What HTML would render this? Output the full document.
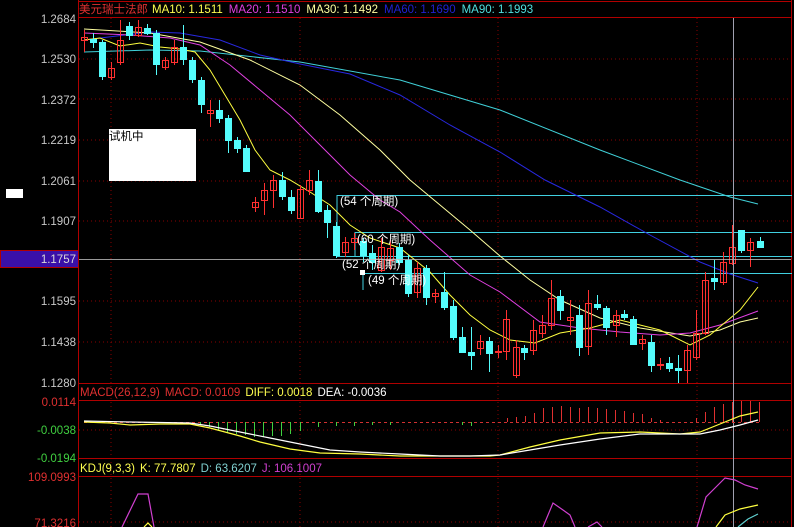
<!DOCTYPE html>
<html><head><meta charset="utf-8"><style>
html,body{margin:0;padding:0;background:#000;width:794px;height:527px;overflow:hidden}
svg{display:block;font-family:"Liberation Sans","Noto Sans CJK SC",sans-serif;font-size:11.5px}
</style></head><body>
<svg width="794" height="527" viewBox="0 0 794 527" xmlns="http://www.w3.org/2000/svg">
<rect width="794" height="527" fill="#000"/>
<!-- grid dotted -->
<g stroke="#8a0000" stroke-width="1" stroke-dasharray="1,3">
<line x1="79" y1="59" x2="791" y2="59"/><line x1="79" y1="99" x2="791" y2="99"/><line x1="79" y1="140" x2="791" y2="140"/><line x1="79" y1="181" x2="791" y2="181"/><line x1="79" y1="221" x2="791" y2="221"/><line x1="79" y1="301" x2="791" y2="301"/><line x1="79" y1="342" x2="791" y2="342"/>
<line x1="79" y1="430" x2="791" y2="430"/><line x1="79" y1="522" x2="791" y2="522"/>
<line x1="111" y1="18" x2="111" y2="527"/><line x1="300" y1="18" x2="300" y2="527"/><line x1="498" y1="18" x2="498" y2="527"/><line x1="697" y1="18" x2="697" y2="527"/>
</g>
<!-- solid red frame -->
<g stroke="#b00000" stroke-width="1" fill="none">
<line x1="78.5" y1="0" x2="78.5" y2="527"/><line x1="791.5" y1="0" x2="791.5" y2="527"/>
<line x1="78" y1="1.5" x2="792" y2="1.5"/><line x1="78" y1="17.5" x2="792" y2="17.5"/>
<line x1="78" y1="383.5" x2="792" y2="383.5"/><line x1="78" y1="400.5" x2="792" y2="400.5"/>
<line x1="78" y1="458.5" x2="792" y2="458.5"/><line x1="78" y1="476.5" x2="792" y2="476.5"/>
</g>
<!-- axis labels -->
<g fill="#c8c8c8" text-anchor="end">
<text x="76" y="23">1.2684</text><text x="76" y="63">1.2530</text><text x="76" y="104">1.2372</text><text x="76" y="144">1.2219</text><text x="76" y="185">1.2061</text><text x="76" y="225">1.1907</text><text x="76" y="305">1.1595</text><text x="76" y="346">1.1438</text><text x="76" y="387">1.1280</text>
</g>
<rect x="0.5" y="250.5" width="78" height="17" fill="#3a10a8" stroke="#b00000"/>
<text x="76" y="263" fill="#d8d8d8" text-anchor="end">1.1757</text>
<rect x="6" y="189" width="17" height="9" fill="#fff"/>
<text x="76" y="406" fill="#e03030" text-anchor="end">0.0114</text>
<text x="76" y="434" fill="#40d040" text-anchor="end">-0.0038</text>
<text x="76" y="462" fill="#40d040" text-anchor="end">-0.0194</text>
<text x="76" y="481" fill="#e03030" text-anchor="end">109.0993</text>
<text x="76" y="527" fill="#e03030" text-anchor="end">71.3216</text>
<!-- title -->
<text x="79" y="13"><tspan fill="#e03030">美元瑞士法郎</tspan><tspan fill="#ffff50" dx="4">MA10: 1.1511</tspan><tspan fill="#e040e0" dx="6">MA20: 1.1510</tspan><tspan fill="#ffffa0" dx="6">MA30: 1.1492</tspan><tspan fill="#2020d0" dx="6">MA60: 1.1690</tspan><tspan fill="#50e0e0" dx="6">MA90: 1.1993</tspan></text>
<text x="80" y="396"><tspan fill="#e03030">MACD(26,12,9)</tspan><tspan fill="#e03030" dx="5">MACD: 0.0109</tspan><tspan fill="#ffff50" dx="5">DIFF: 0.0018</tspan><tspan fill="#ffffff" dx="5">DEA: -0.0036</tspan></text>
<text x="80" y="472"><tspan fill="#ffff50">KDJ(9,3,3)</tspan><tspan fill="#ffff50" dx="5">K: 77.7807</tspan><tspan fill="#80d0d0" dx="5">D: 63.6207</tspan><tspan fill="#d040d0" dx="5">J: 106.1007</tspan></text>
<!-- cycle annotation lines -->
<g stroke="#40d0e0" stroke-width="1" fill="none">
<polyline points="337,256 337,195.5 792,195.5"/>
<polyline points="355,256 355,232.5 792,232.5"/>
<line x1="337" y1="256.5" x2="792" y2="256.5"/>
<polyline points="363,290 363,273.5 792,273.5"/>
</g>
<!-- MAs -->
<g fill="none" stroke-width="1">
<polyline stroke="#40d0d8" points="84,52 150,50 200,51 300,62 400,80 500,110 600,150 680,180 730,197 758,204"/>
<polyline stroke="#2828e0" points="84,40 150,32 180,33 220,40 260,55 300,64 350,74 400,95 450,125 500,152 545,180 600,207 650,235 700,262 730,274 758,283"/>
<polyline stroke="#ffffa0" points="84,29 150,33 200,42 250,60 300,85 340,115 380,150 410,180 440,205 470,230 500,256 530,280 560,300 600,318 640,328 690,336 720,330 740,322 758,318"/>
<polyline stroke="#e040e0" points="84,33 130,35 170,38 200,45 230,65 260,90 290,115 320,145 350,175 380,200 400,212 430,240 470,275 500,292 540,322 580,328 620,332 660,335 690,333 720,325 758,311"/>
<polyline stroke="#ffff40" points="84,40 100,38 120,46 140,43 160,47 180,49 195,52 210,70 225,95 240,120 255,150 270,170 290,180 310,192 330,205 350,225 370,238 400,248 430,272 450,295 470,315 490,330 510,340 535,343 560,333 590,328 620,320 660,330 690,345 710,335 740,310 758,287"/>
</g>
<!-- candles -->
<g stroke-width="1">
<g stroke="#ff3030" fill="none">
<line x1="84.5" y1="30" x2="84.5" y2="52"/><rect x="81.5" y="37.5" width="6" height="3"/>
<line x1="111.5" y1="62" x2="111.5" y2="80"/><rect x="108.5" y="68.5" width="6" height="9"/>
<line x1="120.5" y1="20" x2="120.5" y2="65"/><rect x="117.5" y="40.5" width="6" height="22"/>
<line x1="138.5" y1="20" x2="138.5" y2="37"/><rect x="135.5" y="27.5" width="6" height="8"/>
<line x1="165.5" y1="57" x2="165.5" y2="70"/><rect x="162.5" y="60.5" width="6" height="7"/>
<line x1="174.5" y1="40" x2="174.5" y2="65"/><rect x="171.5" y="47.5" width="6" height="15"/>
<line x1="210.5" y1="100" x2="210.5" y2="127"/><rect x="207.5" y="110.5" width="6" height="3"/>
<line x1="255.5" y1="197" x2="255.5" y2="212"/><rect x="252.5" y="202.5" width="6" height="5"/>
<line x1="264.5" y1="183" x2="264.5" y2="215"/><rect x="261.5" y="190.5" width="6" height="10"/>
<line x1="273.5" y1="175" x2="273.5" y2="208"/><rect x="270.5" y="180.5" width="6" height="10"/>
<line x1="300.5" y1="185" x2="300.5" y2="219"/><rect x="297.5" y="189.5" width="6" height="29"/>
<line x1="309.5" y1="170" x2="309.5" y2="195"/><rect x="306.5" y="180.5" width="6" height="10"/>
<line x1="345.5" y1="237" x2="345.5" y2="257"/><rect x="342.5" y="242.5" width="6" height="10"/>
<line x1="354.5" y1="233" x2="354.5" y2="250"/><rect x="351.5" y="238.5" width="6" height="4"/>
<line x1="381.5" y1="238" x2="381.5" y2="272"/><rect x="378.5" y="247.5" width="6" height="23"/>
<line x1="390.5" y1="240" x2="390.5" y2="270"/><rect x="387.5" y="248.5" width="6" height="12"/>
<line x1="417.5" y1="262" x2="417.5" y2="298"/><rect x="414.5" y="268.5" width="6" height="24"/>
<line x1="435.5" y1="289" x2="435.5" y2="303"/><rect x="432.5" y="293.5" width="6" height="3"/>
<line x1="480.5" y1="335" x2="480.5" y2="355"/><rect x="477.5" y="341.5" width="6" height="7"/>
<line x1="498.5" y1="345" x2="498.5" y2="358"/><rect x="495.5" y="351.5" width="6" height="1"/>
<line x1="506.5" y1="310" x2="506.5" y2="360"/><rect x="503.5" y="319.5" width="6" height="32"/>
<line x1="516.5" y1="340" x2="516.5" y2="378"/><rect x="513.5" y="347.5" width="6" height="28"/>
<line x1="533.5" y1="320" x2="533.5" y2="355"/><rect x="530.5" y="330.5" width="6" height="20"/>
<line x1="542.5" y1="315" x2="542.5" y2="338"/><rect x="539.5" y="325.5" width="6" height="8"/>
<line x1="551.5" y1="280" x2="551.5" y2="330"/><rect x="548.5" y="298.5" width="6" height="27"/>
<line x1="570.5" y1="300" x2="570.5" y2="335"/><rect x="567.5" y="317.5" width="6" height="3"/>
<line x1="588.5" y1="290" x2="588.5" y2="355"/><rect x="585.5" y="303.5" width="6" height="43"/>
<line x1="616.5" y1="310" x2="616.5" y2="337"/><rect x="613.5" y="315.5" width="6" height="10"/>
<line x1="642.5" y1="335" x2="642.5" y2="350"/><rect x="639.5" y="339.5" width="6" height="4"/>
<line x1="660.5" y1="358" x2="660.5" y2="370"/><rect x="657.5" y="364.5" width="6" height="1"/>
<line x1="687.5" y1="345" x2="687.5" y2="383"/><rect x="684.5" y="350.5" width="6" height="20"/>
<line x1="696.5" y1="310" x2="696.5" y2="360"/><rect x="693.5" y="333.5" width="6" height="24"/>
<line x1="705.5" y1="272" x2="705.5" y2="335"/><rect x="702.5" y="280.5" width="6" height="53"/>
<line x1="723.5" y1="252" x2="723.5" y2="285"/><rect x="720.5" y="262.5" width="6" height="20"/>
<line x1="732.5" y1="225" x2="732.5" y2="265"/><rect x="729.5" y="247.5" width="6" height="16"/>
<line x1="750.5" y1="238" x2="750.5" y2="267"/><rect x="747.5" y="242.5" width="6" height="8"/>
</g>
<g stroke="#54fcfc" fill="#54fcfc">
<line x1="93.5" y1="33" x2="93.5" y2="48"/><rect x="90.5" y="39.5" width="6" height="3"/>
<line x1="102.5" y1="40" x2="102.5" y2="80"/><rect x="99.5" y="42.5" width="6" height="34"/>
<line x1="129.5" y1="22" x2="129.5" y2="40"/><rect x="126.5" y="26.5" width="6" height="9"/>
<line x1="147.5" y1="24" x2="147.5" y2="35"/><rect x="144.5" y="28.5" width="6" height="5"/>
<line x1="156.5" y1="30" x2="156.5" y2="75"/><rect x="153.5" y="33.5" width="6" height="31"/>
<line x1="183.5" y1="25" x2="183.5" y2="65"/><rect x="180.5" y="47.5" width="6" height="12"/>
<line x1="192.5" y1="57" x2="192.5" y2="83"/><rect x="189.5" y="60.5" width="6" height="19"/>
<line x1="201.5" y1="77" x2="201.5" y2="113"/><rect x="198.5" y="80.5" width="6" height="24"/>
<line x1="219.5" y1="100" x2="219.5" y2="123"/><rect x="216.5" y="110.5" width="6" height="8"/>
<line x1="228.5" y1="115" x2="228.5" y2="153"/><rect x="225.5" y="118.5" width="6" height="22"/>
<line x1="237.5" y1="137" x2="237.5" y2="153"/><rect x="234.5" y="140.5" width="6" height="8"/>
<line x1="246.5" y1="145" x2="246.5" y2="172"/><rect x="243.5" y="148.5" width="6" height="23"/>
<line x1="282.5" y1="172" x2="282.5" y2="200"/><rect x="279.5" y="180.5" width="6" height="16"/>
<line x1="291.5" y1="190" x2="291.5" y2="214"/><rect x="288.5" y="197.5" width="6" height="13"/>
<line x1="318.5" y1="170" x2="318.5" y2="213"/><rect x="315.5" y="181.5" width="6" height="30"/>
<line x1="327.5" y1="205" x2="327.5" y2="238"/><rect x="324.5" y="210.5" width="6" height="12"/>
<line x1="336.5" y1="222" x2="336.5" y2="258"/><rect x="333.5" y="226.5" width="6" height="29"/>
<line x1="363.5" y1="238" x2="363.5" y2="262"/><rect x="360.5" y="241.5" width="6" height="14"/>
<line x1="372.5" y1="245" x2="372.5" y2="270"/><rect x="369.5" y="253.5" width="6" height="9"/>
<line x1="399.5" y1="243" x2="399.5" y2="265"/><rect x="396.5" y="247.5" width="6" height="15"/>
<line x1="408.5" y1="255" x2="408.5" y2="297"/><rect x="405.5" y="260.5" width="6" height="33"/>
<line x1="426.5" y1="265" x2="426.5" y2="305"/><rect x="423.5" y="268.5" width="6" height="29"/>
<line x1="444.5" y1="272" x2="444.5" y2="310"/><rect x="441.5" y="292.5" width="6" height="15"/>
<line x1="453.5" y1="300" x2="453.5" y2="340"/><rect x="450.5" y="306.5" width="6" height="31"/>
<line x1="462.5" y1="327" x2="462.5" y2="345"/><rect x="459.5" y="337.5" width="6" height="15"/>
<line x1="471.5" y1="327" x2="471.5" y2="370"/><rect x="468.5" y="352.5" width="6" height="3"/>
<line x1="489.5" y1="337" x2="489.5" y2="372"/><rect x="486.5" y="341.5" width="6" height="12"/>
<line x1="524.5" y1="345" x2="524.5" y2="360"/><rect x="521.5" y="348.5" width="6" height="4"/>
<line x1="560.5" y1="290" x2="560.5" y2="320"/><rect x="557.5" y="296.5" width="6" height="14"/>
<line x1="579.5" y1="305" x2="579.5" y2="356"/><rect x="576.5" y="315.5" width="6" height="32"/>
<line x1="597.5" y1="295" x2="597.5" y2="310"/><rect x="594.5" y="304.5" width="6" height="3"/>
<line x1="606.5" y1="306" x2="606.5" y2="335"/><rect x="603.5" y="308.5" width="6" height="19"/>
<line x1="624.5" y1="310" x2="624.5" y2="320"/><rect x="621.5" y="314.5" width="6" height="3"/>
<line x1="633.5" y1="316" x2="633.5" y2="345"/><rect x="630.5" y="319.5" width="6" height="25"/>
<line x1="651.5" y1="335" x2="651.5" y2="372"/><rect x="648.5" y="342.5" width="6" height="23"/>
<line x1="669.5" y1="357" x2="669.5" y2="372"/><rect x="666.5" y="363.5" width="6" height="5"/>
<line x1="678.5" y1="355" x2="678.5" y2="383"/><rect x="675.5" y="368.5" width="6" height="2"/>
<line x1="714.5" y1="260" x2="714.5" y2="290"/><rect x="711.5" y="278.5" width="6" height="3"/>
<line x1="741.5" y1="230" x2="741.5" y2="253"/><rect x="738.5" y="230.5" width="6" height="20"/>
<line x1="760.5" y1="237" x2="760.5" y2="248"/><rect x="757.5" y="241.5" width="6" height="6"/>
</g>
</g>
<!-- annotation texts -->
<g fill="#ffffff">
<text x="340" y="205">(54 个周期)</text>
<text x="357" y="243">(60 个周期)</text>
<text x="342" y="268">(52 个周期)</text>
<text x="368" y="284">(49 个周期)</text>
</g>
<rect x="360" y="270" width="5" height="5" fill="#fff"/>
<!-- crosshair -->
<line x1="79" y1="259.5" x2="791" y2="259.5" stroke="#c0c0c0" stroke-width="1" opacity="0.8"/>
<line x1="733.5" y1="18" x2="733.5" y2="527" stroke="#a0a0b0" stroke-width="1"/>
<!-- test box -->
<rect x="109" y="129" width="87" height="52" fill="#fff"/>
<text x="109" y="140" fill="#000">试机中</text>
<!-- MACD -->
<line x1="84" y1="422.5" x2="760" y2="422.5" stroke="#d03030" stroke-dasharray="3,3"/>
<g stroke="#40d040">
<line x1="200.5" y1="422" x2="200.5" y2="425"/><line x1="209.5" y1="422" x2="209.5" y2="427"/><line x1="218.5" y1="422" x2="218.5" y2="430"/><line x1="227.5" y1="422" x2="227.5" y2="432"/><line x1="236.5" y1="422" x2="236.5" y2="434"/><line x1="245.5" y1="422" x2="245.5" y2="435"/><line x1="254.5" y1="422" x2="254.5" y2="437"/><line x1="263.5" y1="422" x2="263.5" y2="437"/><line x1="272.5" y1="422" x2="272.5" y2="436"/><line x1="281.5" y1="422" x2="281.5" y2="436"/><line x1="290.5" y1="422" x2="290.5" y2="434"/><line x1="300.5" y1="422" x2="300.5" y2="431"/><line x1="318.5" y1="422" x2="318.5" y2="427"/><line x1="336.5" y1="422" x2="336.5" y2="426"/><line x1="354.5" y1="422" x2="354.5" y2="426"/><line x1="372.5" y1="422" x2="372.5" y2="425"/><line x1="390.5" y1="422" x2="390.5" y2="425"/><line x1="462.5" y1="422" x2="462.5" y2="425"/><line x1="471.5" y1="422" x2="471.5" y2="426"/>
</g>
<g stroke="#e03030">
<line x1="507.5" y1="418" x2="507.5" y2="422"/><line x1="516.5" y1="417" x2="516.5" y2="422"/><line x1="525.5" y1="416" x2="525.5" y2="422"/><line x1="534.5" y1="413" x2="534.5" y2="422"/><line x1="543.5" y1="408" x2="543.5" y2="422"/><line x1="552.5" y1="407" x2="552.5" y2="422"/><line x1="561.5" y1="406" x2="561.5" y2="422"/><line x1="570.5" y1="407" x2="570.5" y2="422"/><line x1="579.5" y1="408" x2="579.5" y2="422"/><line x1="588.5" y1="407" x2="588.5" y2="422"/><line x1="597.5" y1="408" x2="597.5" y2="422"/><line x1="606.5" y1="409" x2="606.5" y2="422"/><line x1="615.5" y1="410" x2="615.5" y2="422"/><line x1="624.5" y1="411" x2="624.5" y2="422"/><line x1="633.5" y1="413" x2="633.5" y2="422"/><line x1="642.5" y1="414" x2="642.5" y2="422"/><line x1="651.5" y1="418" x2="651.5" y2="422"/><line x1="660.5" y1="420" x2="660.5" y2="422"/><line x1="696.5" y1="418" x2="696.5" y2="422"/><line x1="705.5" y1="412" x2="705.5" y2="422"/><line x1="714.5" y1="407" x2="714.5" y2="422"/><line x1="723.5" y1="404" x2="723.5" y2="422"/><line x1="732.5" y1="402" x2="732.5" y2="422"/><line x1="741.5" y1="401" x2="741.5" y2="422"/><line x1="750.5" y1="401" x2="750.5" y2="422"/><line x1="759.5" y1="402" x2="759.5" y2="422"/>
</g>
<g fill="none" stroke-width="1.2">
<polyline stroke="#ffff40" points="84,422 110,423 130,425 160,424 190,424 210,428 240,436 260,442 290,449 320,453 360,454 400,456 430,456 460,456 490,456 500,455 530,447 560,440 600,433 640,432 680,434 700,432 720,424 740,416 758,412"/>
<polyline stroke="#ffffff" points="84,421 130,422 190,423 210,426 240,432 270,438 300,444 330,450 360,452 400,454 440,456 470,456 500,455 530,450 560,445 600,439 640,434 680,434 700,434 720,430 740,425 758,420"/>
</g>
<!-- KDJ -->
<g fill="none" stroke-width="1.2">
<polyline stroke="#d040d0" points="122,527 138,494 148,494 154,527"/>
<polyline stroke="#d040d0" points="543,527 553,503 563,510 570,515 575,527"/>
<polyline stroke="#d040d0" points="588,527 597,522 602,527"/>
<polyline stroke="#d040d0" points="697,527 706,497 716,487 725,478 735,480 745,485 758,489"/>
<polyline stroke="#ffff40" points="716,527 725,515 740,509 758,505"/>
<polyline stroke="#60d0d0" points="738,527 748,519 758,514"/>
<polyline stroke="#ffff40" points="144,527 148,523 152,527"/>
</g>
</svg>
</body></html>
